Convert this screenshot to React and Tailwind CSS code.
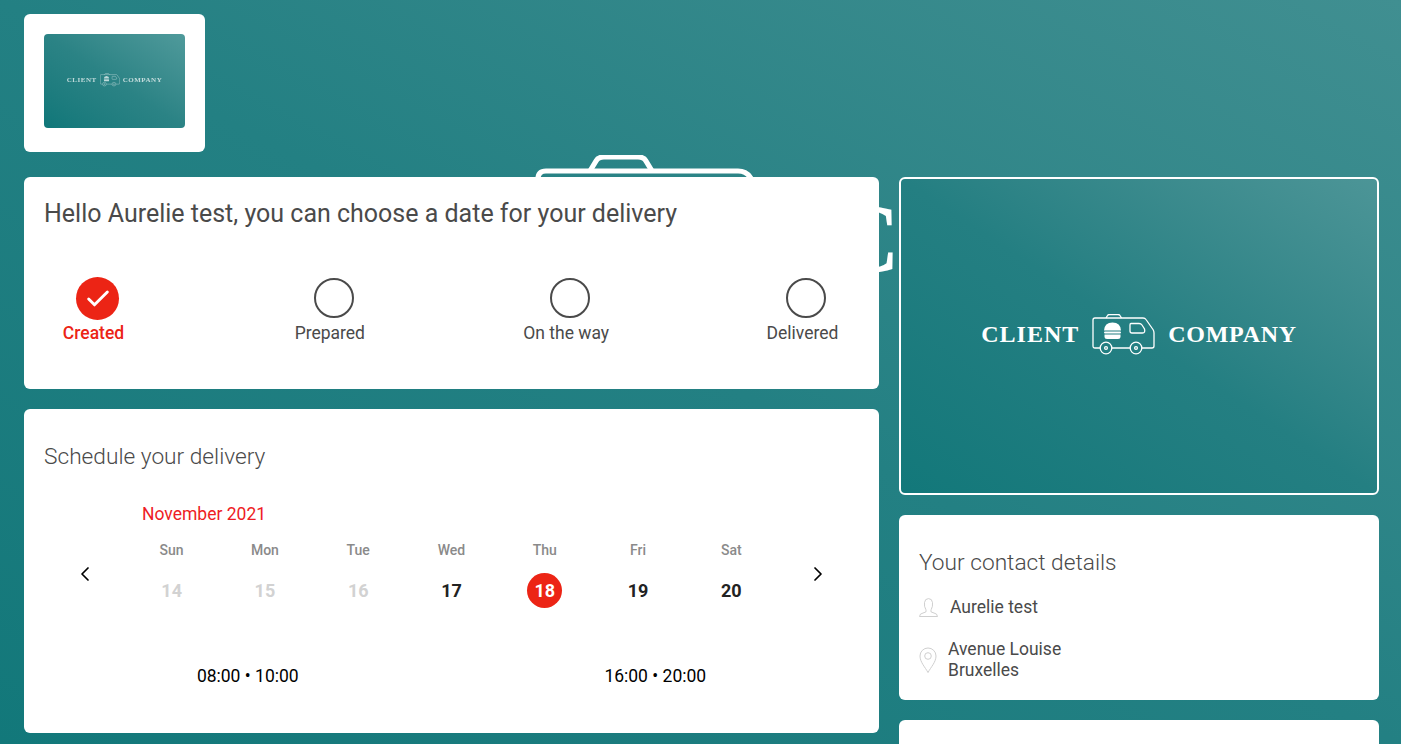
import React from 'react';
import { Check, ChevronLeft, ChevronRight } from 'lucide-react';

const Truck = ({ className }) => (
  <svg viewBox="0 0 63 42" fill="none" stroke="currentColor" strokeWidth="1.3" className={className}>
    <path d="M14 4 L15.5 1.5 Q16 0.5 17.5 0.5 H26 Q27.5 0.5 28 1.5 L29.5 4" />
    <path d="M8 34 H3 Q1 34 1 32 V6 Q1 4 3 4 H51 Q53 4 54 5.5 L61 15.5 Q62 17 62 19 V32 Q62 34 60 34 H50 M38 34 H20" />
    <path d="M39 9.5 H47 Q49 9.5 50 11 L52.5 15 Q53.5 19 50.5 19 H40 Q38 19 38 17 V11 Q38 9.5 39 9.5 Z" />
    <circle cx="14" cy="34" r="5.8" />
    <circle cx="14" cy="34" r="1.4" />
    <circle cx="44" cy="34" r="5.8" />
    <circle cx="44" cy="34" r="1.4" />
    <g fill="currentColor" stroke="none">
      <path d="M12 16.5 Q12.5 8.5 20.5 8.5 Q28.5 8.5 29 16.5 Z" />
      <rect x="12" y="17.5" width="17" height="2" rx="1" />
      <path d="M12.5 20.5 H28.5 V23 Q28.5 25 26 25 H15 Q12.5 25 12.5 23 Z" />
    </g>
  </svg>
);

const UserIcon = () => (
  <svg viewBox="0 0 19 19" fill="none" stroke="#c9c9c9" strokeWidth="0.9" className="w-[19px] h-[19px] shrink-0">
    <path d="M0.5 18.5 H18.5 Q18.3 15.5 15 15 L12.2 14 Q11.6 13 12.2 11.5 Q14 8.5 13.5 4.5 Q13 0.6 9.5 0.6 Q6 0.6 5.5 4.5 Q5 8.5 6.8 11.5 Q7.4 13 6.8 14 L4 15 Q0.7 15.5 0.5 18.5 Z" />
  </svg>
);

const PinIcon = () => (
  <svg viewBox="0 0 18 26" fill="none" stroke="#c9c9c9" strokeWidth="0.9" className="w-[18px] h-[26px] shrink-0">
    <path d="M9 25.5 C6 20 1 15 1 9 A8 8 0 0 1 17 9 C17 15 12 20 9 25.5 Z" />
    <circle cx="9" cy="9" r="3.3" />
  </svg>
);

const steps = ['Created', 'Prepared', 'On the way', 'Delivered'];

const days = [
  { name: 'Sun', date: 14, off: true },
  { name: 'Mon', date: 15, off: true },
  { name: 'Tue', date: 16, off: true },
  { name: 'Wed', date: 17 },
  { name: 'Thu', date: 18, selected: true },
  { name: 'Fri', date: 19 },
  { name: 'Sat', date: 20 },
];

const App = () => {
  return (
    <div className="relative h-screen overflow-hidden bg-linear-to-tr from-[#12787a] via-[#238083] via-50% to-[#408f91] font-['Roboto',sans-serif] text-[#4a4a4a]">
      {/* big blurred logo behind the cards */}
      <div className="absolute left-[534px] top-[155px] flex items-center gap-[42px] text-white blur-[0.6px]">
        <Truck className="w-[252px] h-[168px]" />
        <span className="font-['Liberation_Serif',serif] font-bold text-[100px] leading-none tracking-[6px]">COMPANY</span>
      </div>

      <div className="relative px-6 pt-3.5">
        <div className="w-[181px] h-[138px] bg-white rounded-md p-5 pb-6">
          <div className="h-[94px] pb-[2px] rounded-sm bg-linear-to-tr from-[#0f7779] via-[#2b8385] via-50% to-[#4f9a9b] flex items-center justify-center gap-[3px] text-white/70 blur-[0.5px] font-['Liberation_Serif',serif] text-[7px] tracking-[0.5px] font-bold">
            <span>CLIENT</span>
            <Truck className="w-[20px] h-[14px]" />
            <span>COMPANY</span>
          </div>
        </div>

        <div className="flex gap-5 mt-[25px]">
          <div className="w-[855px] shrink-0 flex flex-col gap-5">
            <div className="h-[212px] bg-white rounded-md pt-[21px]">
              <h1 className="pl-5 text-[25px] leading-[32px]">Hello Aurelie test, you can choose a date for your delivery</h1>
              <div className="flex justify-between pl-[19.5px] pr-[26.5px] mt-[47px]">
                {steps.map((step, i) => (
                  <div key={step} className="w-[100px] flex flex-col items-center">
                    {i === 0 ? (
                      <div className="w-[43px] h-[43px] ml-2 rounded-full bg-[#ec2415] flex items-center justify-center text-white">
                        <Check size={28} strokeWidth={2.5} />
                      </div>
                    ) : (
                      <div className="w-10 h-10 ml-2 mt-[1px] mb-[2px] rounded-full border-2 border-[#4a4a4a]" />
                    )}
                    <span className={i === 0 ? 'mt-[1px] text-[17.5px] leading-6 font-medium text-[#ec2415]' : 'mt-[1px] text-[17.5px] leading-6 text-[#4a4a4a]'}>
                      {step}
                    </span>
                  </div>
                ))}
              </div>
            </div>

            <div className="h-[324px] bg-white rounded-md pt-[32px]">
              <h2 className="pl-5 text-[22.7px] leading-8 font-light">Schedule your delivery</h2>
              <div className="pl-[118px] mt-[29px] text-[17.5px] leading-6 text-[#ee1c25]">November 2021</div>
              <div className="flex items-center mt-[14px]">
                <div className="w-[101px] shrink-0 flex justify-end pr-[28px] text-black">
                  <ChevronLeft size={24} strokeWidth={1.75} />
                </div>
                <div className="w-[653px] shrink-0 grid grid-cols-7">
                  {days.map((d) => (
                    <div key={d.name} className="flex flex-col items-center">
                      <span className="text-sm leading-5 font-medium text-[#8a8a8a]">{d.name}</span>
                      <div className={
                        d.selected
                          ? 'w-[35px] h-[35px] mt-[13px] rounded-full bg-[#ec2415] flex items-center justify-center text-lg font-bold text-white'
                          : d.off
                            ? 'w-[35px] h-[35px] mt-[13px] flex items-center justify-center text-lg font-bold text-[#d2d2d2]'
                            : 'w-[35px] h-[35px] mt-[13px] flex items-center justify-center text-lg font-bold text-[#222222]'
                      }>
                        {d.date}
                      </div>
                    </div>
                  ))}
                </div>
                <div className="pl-[28px] text-black">
                  <ChevronRight size={24} strokeWidth={1.75} />
                </div>
              </div>
              <div className="grid grid-cols-2 px-5 mt-[56px] text-[17.5px] leading-6 text-black text-center">
                <span>08:00 • 10:00</span>
                <span>16:00 • 20:00</span>
              </div>
            </div>
          </div>

          <div className="w-[480px] shrink-0 flex flex-col gap-5">
            <div className="h-[318px] rounded-md border-2 border-white bg-linear-to-tr from-[#12787a] via-[#247f82] via-50% to-[#4c9597] flex items-center justify-center gap-[13px] text-white pb-[2px]">
              <span className="font-['Liberation_Serif',serif] font-bold text-2xl tracking-[1px] -mt-[2px]">CLIENT</span>
              <Truck className="w-[63px] h-[42px]" />
              <span className="font-['Liberation_Serif',serif] font-bold text-2xl tracking-[0.7px] -mt-[2px]">COMPANY</span>
            </div>

            <div className="h-[185px] bg-white rounded-md pt-[32px] pl-5">
              <h2 className="text-[22.7px] leading-8 font-light">Your contact details</h2>
              <div className="flex items-center mt-[16px] h-6">
                <UserIcon />
                <span className="ml-[12px] text-[17.5px]">Aurelie test</span>
              </div>
              <div className="flex items-center mt-[20px]">
                <PinIcon />
                <div className="ml-[11px] text-[17.5px] leading-[21px]">
                  <div>Avenue Louise</div>
                  <div>Bruxelles</div>
                </div>
              </div>
            </div>

            <div className="h-[100px] bg-white rounded-md" />
          </div>
        </div>
      </div>
    </div>
  );
};

export default App;
